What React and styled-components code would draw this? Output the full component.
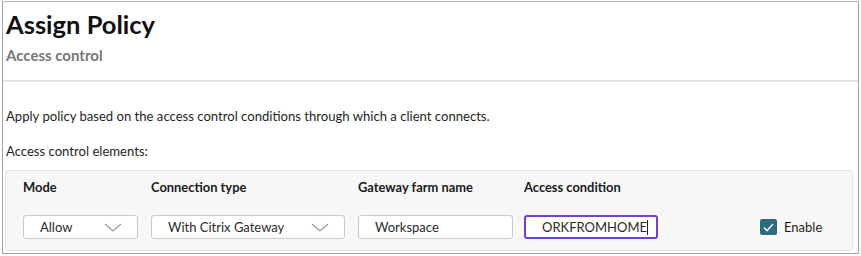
import React from "react";
import styled, { createGlobalStyle } from "styled-components";

const Global = createGlobalStyle`
  html, body { margin: 0; padding: 0; background: #fff; }
  body { font-family: Lato, "Open Sans", sans-serif; color: #1f1f1f; }
  * { box-sizing: border-box; }
`;

const Frame = styled.div`
  margin: 1px 0 0 2px;
  width: 857px;
  height: 253px;
  border: 1px solid #a3a3a3;
  border-top-color: #b8b8b8;
  display: flex;
  flex-direction: column;
`;

const Header = styled.header`
  padding: 7px 0 0 3px;
  height: 80px;
  border-bottom: 2px solid #e2e2e2;
`;

const Title = styled.h1`
  margin: 0;
  font-size: 25.5px;
  line-height: 30px;
  font-weight: 700;
  color: #111;
`;

const Subtitle = styled.h2`
  margin: 7px 0 0;
  font-size: 15px;
  line-height: 18px;
  font-weight: 700;
  color: #767676;
`;

const Body = styled.div`
  flex: 1;
  display: flex;
  flex-direction: column;
`;

const Text = styled.p`
  margin: ${(p) => p.$top}px 0 0 3px;
  font-size: 13.1px;
  line-height: 16px;
  color: #1f1f1f;
`;

const Panel = styled.div`
  margin: 11px 0 0 2px;
  width: 848px;
  height: 81px;
  background: #f7f7f7;
  border: 1px solid #e3e3e3;
  border-radius: 4px;
  padding: 8px 0 0 17px;
  display: grid;
  grid-template-columns: 128px 207px 166px 236px 1fr;
  grid-template-rows: 16px 24px;
  row-gap: 20px;
  align-items: center;
`;

const ColHead = styled.div`
  font-size: 12.9px;
  font-weight: 700;
  color: #1a1a1a;
`;

const Box = styled.div`
  width: ${(p) => p.$w}px;
  height: 24px;
  background: #fff;
  border: ${(p) => (p.$focus ? "2px solid #6f3fd6" : "1px solid #c9c9c9")};
  border-radius: 3px;
  display: flex;
  align-items: center;
  justify-content: space-between;
  padding: 0 ${(p) => (p.$focus ? 2 : 15)}px 0 16px;
  font-size: 13px;
  color: #2a2a2a;
  overflow: hidden;
  white-space: nowrap;
`;

const Value = styled.span`
  display: flex;
  align-items: center;
`;

const Caret = styled.span`
  display: inline-block;
  width: 1px;
  height: 15px;
  background: #222;
`;

const Chevron = () => (
  <svg width="18" height="9" viewBox="0 0 18 9" fill="none">
    <path d="M1 1l8 7 8-7" stroke="#9a9a9a" strokeWidth="1.2" />
  </svg>
);

const CheckWrap = styled.label`
  display: flex;
  align-items: center;
  gap: 7px;
  font-size: 13px;
  color: #1f1f1f;
`;

const CheckBox = styled.span`
  width: 17px;
  height: 16px;
  border-radius: 2px;
  background: #2e6b7e;
  display: flex;
  align-items: center;
  justify-content: center;
`;

export default function App() {
  return (
    <>
      <Global />
      <Frame>
        <Header>
          <Title>Assign Policy</Title>
          <Subtitle>Access control</Subtitle>
        </Header>
        <Body>
          <Text $top={26}>
            Apply policy based on the access control conditions through which a client connects.
          </Text>
          <Text $top={19}>Access control elements:</Text>
          <Panel>
            <ColHead>Mode</ColHead>
            <ColHead>Connection type</ColHead>
            <ColHead>Gateway farm name</ColHead>
            <ColHead>Access condition</ColHead>
            <div />
            <Box $w={115}>
              <span>Allow</span>
              <Chevron />
            </Box>
            <Box $w={194}>
              <span>With Citrix Gateway</span>
              <Chevron />
            </Box>
            <Box $w={155}>
              <span>Workspace</span>
            </Box>
            <Box $w={134} $focus>
              <Value>
                ORKFROMHOME
                <Caret />
              </Value>
            </Box>
            <CheckWrap>
              <CheckBox>
                <svg width="11" height="9" viewBox="0 0 11 9" fill="none">
                  <path d="M1 4.5l3 3.2L10 1" stroke="#fff" strokeWidth="1.4" />
                </svg>
              </CheckBox>
              Enable
            </CheckWrap>
          </Panel>
        </Body>
      </Frame>
    </>
  );
}
